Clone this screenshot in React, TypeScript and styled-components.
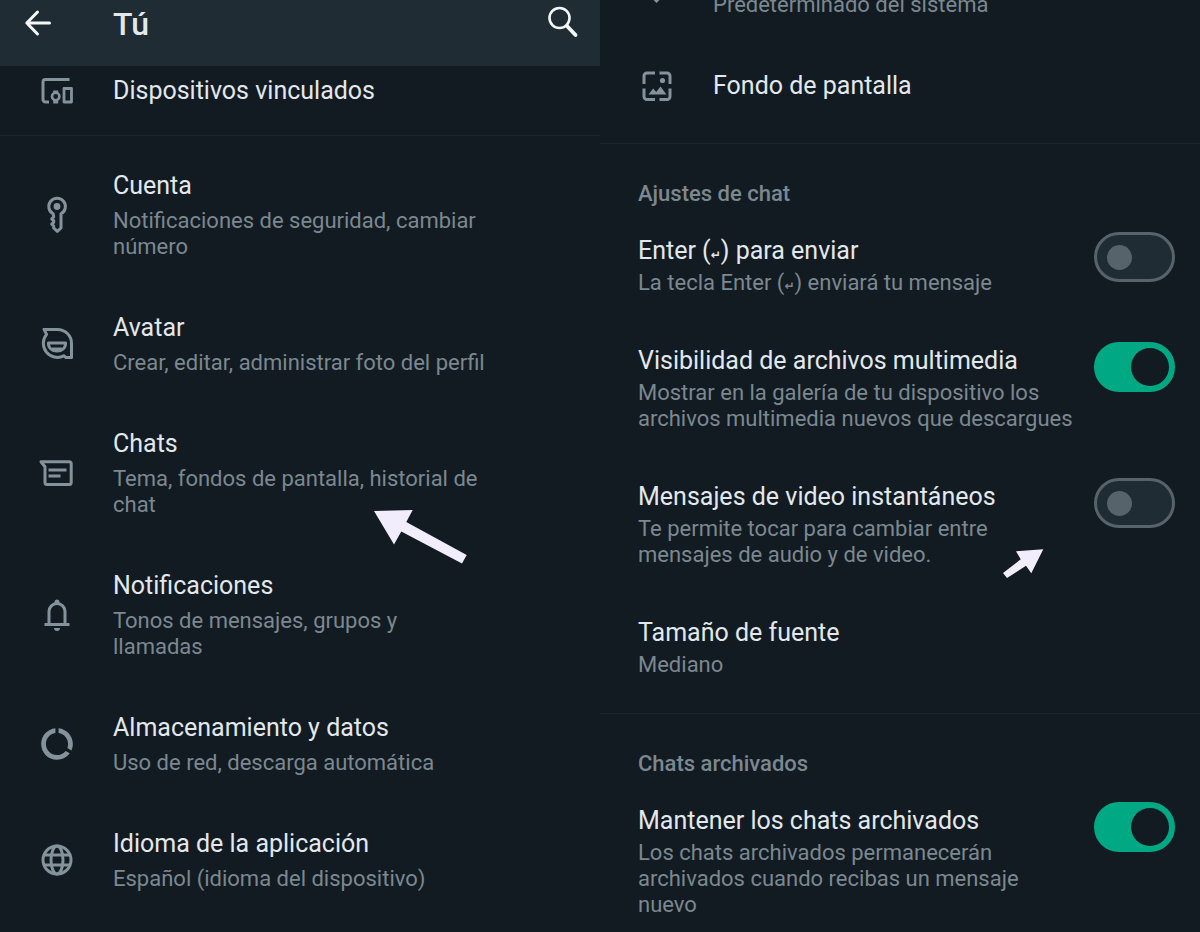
import React from "react";
import styled, { createGlobalStyle } from "styled-components";
import { MdBrightness6, MdDataUsage } from "react-icons/md";

const color = {
  bg: "#121b22",
  bar: "#202c33",
  title: "#e3e8ec",
  muted: "#7c8890",
  icon: "#84929a",
  line: "#18232a",
  green: "#00a884",
  outline: "#56636b",
  arrow: "#f1edfc",
};

const GlobalStyle = createGlobalStyle`
  * { box-sizing: border-box; }
  body {
    margin: 0;
    background: ${color.bg};
    color: ${color.title};
    font-family: Roboto, "Liberation Sans", sans-serif;
  }
`;

const Screens = styled.div`
  display: grid;
  grid-template-columns: 1fr 1fr;
  min-height: 100vh;
  border-bottom: 2px solid #0a0e12;
`;

const Screen = styled.main`
  position: relative;
  min-width: 0;
  overflow: hidden;
`;

const TopBar = styled.header`
  display: flex;
  align-items: center;
  height: 66px;
  padding: 0 17px 20px 18px;
  background: ${color.bar};
`;

const IconButton = styled.button`
  display: flex;
  padding: 0;
  border: 0;
  background: none;
  color: #f4f7f8;
  cursor: pointer;
`;

const ScreenTitle = styled.h1`
  flex: 1;
  margin: 0;
  padding: 2px 0 0 55px;
  font-size: 32px;
  font-weight: 500;
  line-height: 36px;
`;

const Group = styled.section<{ $top?: number; $bottom?: number; $divided?: boolean }>`
  padding-top: ${(p) => p.$top ?? 0}px;
  padding-bottom: ${(p) => p.$bottom ?? 0}px;
  border-bottom: ${(p) => (p.$divided ? `1px solid ${color.line}` : "0")};
`;

const ScrolledList = styled.div`
  margin-top: -72px;
`;

const NavRow = styled.button<{ $compact?: boolean }>`
  display: flex;
  align-items: center;
  width: 100%;
  padding: ${(p) => (p.$compact ? "9px 112px 28px 36px" : "26px 112px 26px 36px")};
  border: 0;
  background: none;
  color: inherit;
  font: inherit;
  text-align: left;
  cursor: pointer;
`;

const IconSlot = styled.span`
  display: flex;
  flex: none;
  align-items: center;
  justify-content: center;
  width: 41px;
  height: 32px;
  margin-right: 36px;
  color: ${color.icon};

  svg {
    flex: none;
  }
`;

const Texts = styled.span<{ $gap: number }>`
  display: flex;
  flex: 1;
  flex-direction: column;
  gap: ${(p) => p.$gap}px;
  min-width: 0;
`;

const Title = styled.span`
  font-size: 25px;
  line-height: 32px;
`;

const Description = styled.span`
  color: ${color.muted};
  font-size: 22px;
  line-height: 26px;
`;

const SectionLabel = styled.h2`
  margin: 0;
  padding: 37px 38px 4px;
  color: ${color.muted};
  font-size: 22px;
  font-weight: 500;
  line-height: 26px;
`;

const SettingRow = styled.label`
  display: flex;
  align-items: flex-start;
  gap: 16px;
  padding: 21px 25px 25px 38px;
  cursor: pointer;

  & > ${Texts} {
    padding-top: 3px;
  }
`;

const PlainRow = styled.button`
  display: flex;
  width: 100%;
  padding: 24px 25px 25px 38px;
  border: 0;
  background: none;
  color: inherit;
  font: inherit;
  text-align: left;
  cursor: pointer;
`;

const Switch = styled.input`
  appearance: none;
  display: flex;
  flex: none;
  align-items: center;
  width: 81px;
  height: 50px;
  margin: 0;
  padding: 0 10px;
  border: 3px solid ${color.outline};
  border-radius: 25px;
  background: ${color.bar};
  cursor: pointer;

  &::before {
    content: "";
    width: 25px;
    height: 25px;
    border-radius: 50%;
    background: ${color.outline};
  }

  &:checked {
    justify-content: flex-end;
    padding: 0 3px;
    border-color: ${color.green};
    background: ${color.green};
  }

  &:checked::before {
    width: 38px;
    height: 38px;
    background: ${color.bg};
  }
`;

const ReturnKey = styled.span`
  font-family: "DejaVu Sans", sans-serif;
  font-size: 12px;
  font-weight: 700;
  line-height: 12px;
`;

const Pointer = styled.svg<{ $left: number; $top: number }>`
  position: absolute;
  left: ${(p) => p.$left}px;
  top: ${(p) => p.$top}px;
  fill: ${color.arrow};
  pointer-events: none;
`;

const Line = styled.svg.attrs({ width: 40, height: 40, viewBox: "0 0 40 40", "aria-hidden": true })`
  fill: none;
  stroke: currentColor;
  stroke-width: 3;
  stroke-linejoin: round;
`;

const BackIcon = () => (
  <Line strokeLinecap="round">
    <path d="M31.500 20H9M19.500 9 8.800 20l10.700 11" />
  </Line>
);

const SearchIcon = () => (
  <Line strokeLinecap="round">
    <circle cx="16.500" cy="15" r="10" strokeWidth="2.600" />
    <path d="m24 23 8.500 9" strokeWidth="3.800" />
  </Line>
);

const DevicesIcon = () => (
  <Line>
    <path d="M32.500 8.500H8.500a2.500 2.500 0 0 0-2.500 2.500v17.500a2.500 2.500 0 0 0 2.500 2.500H12" />
    <circle cx="18.700" cy="25.500" r="3.700" strokeWidth="2.600" />
    <path d="M16.200 22.500v-3h5v3M16.200 28.500V32.500h5v-4z" fill="currentColor" stroke="none" />
    <path d="M27 17.500h7.500V31H27z" strokeWidth="2.800" />
  </Line>
);

const WallpaperIcon = () => (
  <Line>
    <path d="M7 18V10a3 3 0 0 1 3-3h8M22.500 7h7.500a3 3 0 0 1 3 3v8M33 22.500V30.500a3 3 0 0 1-3 3h-7.500M18 33.500h-8a3 3 0 0 1-3-3V22.500" />
    <circle cx="25.500" cy="14.500" r="2.600" fill="currentColor" stroke="none" />
    <path d="M11.500 28.500 16.200 22.500l3 3.500 4.300-5.500 6 8z" fill="currentColor" stroke="none" />
  </Line>
);

const KeyIcon = () => (
  <Line>
    <path d="M16.200 18.800a8.300 8.300 0 1 1 7.800 0V33l-3.700 3.400-3.600-3.400v-2l-2-1.800 2-1.900v-1.600l-2-1.800 2-1.900z" />
    <circle cx="20" cy="11.500" r="3.400" fill="currentColor" stroke="none" />
  </Line>
);

const AvatarIcon = () => (
  <Line>
    <path d="M7 5.400h13.500A14 14 0 0 1 34.500 19.500v14H29l-2.200-1.700A14 14 0 0 1 9.600 10.400z" />
    <path d="M11.400 19h17.200c0 5-3.600 8-8.600 8s-8.600-3-8.600-8z" />
    <path d="M15 24h10l-2.500 2.500h-5z" fill="currentColor" strokeWidth="1" />
  </Line>
);

const ChatIcon = () => (
  <Line>
    <path d="M4 8.700h28.200a2 2 0 0 1 2 2v18.800a2 2 0 0 1-2 2H10a2 2 0 0 1-2-2V13.800z" />
    <path d="M11.500 17h18M11.500 23h12" />
  </Line>
);

const BellIcon = () => (
  <Line>
    <path d="M7.500 29.500h25M12 29.500V16.500a8 8 0 0 1 16 0v13" />
    <path d="M17.500 8.500V7a2.500 2.500 0 0 1 5 0v1.500zM17 33h6a3 3 0 0 1-6 0z" fill="currentColor" stroke="none" />
  </Line>
);

const GlobeIcon = () => (
  <Line>
    <circle cx="20" cy="20" r="14" />
    <ellipse cx="20" cy="20" rx="6" ry="14" />
    <path d="M7 15h26M7 25h26" />
  </Line>
);

type NavItem = { icon: React.ReactNode; title: string; text?: string; compact?: boolean };

const Nav = ({ icon, title, text, compact }: NavItem) => (
  <NavRow type="button" $compact={compact}>
    <IconSlot>{icon}</IconSlot>
    <Texts $gap={6}>
      <Title>{title}</Title>
      {text && <Description>{text}</Description>}
    </Texts>
  </NavRow>
);

type ToggleItem = { title: React.ReactNode; text: React.ReactNode; on?: boolean };

const Toggle = ({ title, text, on }: ToggleItem) => (
  <SettingRow>
    <Texts $gap={3}>
      <Title>{title}</Title>
      <Description>{text}</Description>
    </Texts>
    <Switch type="checkbox" role="switch" defaultChecked={on} />
  </SettingRow>
);

const settings: NavItem[] = [
  { icon: <KeyIcon />, title: "Cuenta", text: "Notificaciones de seguridad, cambiar número" },
  { icon: <AvatarIcon />, title: "Avatar", text: "Crear, editar, administrar foto del perfil" },
  { icon: <ChatIcon />, title: "Chats", text: "Tema, fondos de pantalla, historial de chat" },
  { icon: <BellIcon />, title: "Notificaciones", text: "Tonos de mensajes, grupos y llamadas" },
  { icon: <MdDataUsage size={38} />, title: "Almacenamiento y datos", text: "Uso de red, descarga automática" },
  { icon: <GlobeIcon />, title: "Idioma de la aplicación", text: "Español (idioma del dispositivo)" },
];

export default function App() {
  return (
    <>
      <GlobalStyle />
      <Screens>
        <Screen>
          <TopBar>
            <IconButton type="button" aria-label="Atrás">
              <BackIcon />
            </IconButton>
            <ScreenTitle>Tú</ScreenTitle>
            <IconButton type="button" aria-label="Buscar">
              <SearchIcon />
            </IconButton>
          </TopBar>
          <Group $divided>
            <Nav icon={<DevicesIcon />} title="Dispositivos vinculados" compact />
          </Group>
          <Group $top={8}>
            {settings.map((item) => (
              <Nav key={item.title} {...item} />
            ))}
          </Group>
          <Pointer $left={374} $top={510} width="94" height="55" viewBox="0 0 94 55" aria-hidden>
            <path d="M0 1 38.700 0 32.300 12 92.700 45 88 53.500 27.300 21.500 20 34.500z" />
          </Pointer>
        </Screen>
        <Screen>
          <ScrolledList>
            <Group $bottom={15} $divided>
              <Nav icon={<MdBrightness6 size={35} />} title="Tema" text="Predeterminado del sistema" />
              <Nav icon={<WallpaperIcon />} title="Fondo de pantalla" />
            </Group>
            <Group $bottom={10} $divided>
              <SectionLabel>Ajustes de chat</SectionLabel>
              <Toggle
                title={<>Enter (<ReturnKey>↵</ReturnKey>) para enviar</>}
                text={<>La tecla Enter (<ReturnKey>↵</ReturnKey>) enviará tu mensaje</>}
              />
              <Toggle
                title="Visibilidad de archivos multimedia"
                text="Mostrar en la galería de tu dispositivo los archivos multimedia nuevos que descargues"
                on
              />
              <Toggle
                title="Mensajes de video instantáneos"
                text="Te permite tocar para cambiar entre mensajes de audio y de video."
              />
              <PlainRow type="button">
                <Texts $gap={3}>
                  <Title>Tamaño de fuente</Title>
                  <Description>Mediano</Description>
                </Texts>
              </PlainRow>
            </Group>
            <Group>
              <SectionLabel>Chats archivados</SectionLabel>
              <Toggle
                title="Mantener los chats archivados"
                text="Los chats archivados permanecerán archivados cuando recibas un mensaje nuevo"
                on
              />
            </Group>
          </ScrolledList>
          <Pointer $left={403} $top={548} width="41" height="31" viewBox="0 0 41 31" aria-hidden>
            <path d="M40.300 1.300 13 3.300 17.700 11.300 0 25 4 30 23 17.700 28.300 25.300z" />
          </Pointer>
        </Screen>
      </Screens>
    </>
  );
}
